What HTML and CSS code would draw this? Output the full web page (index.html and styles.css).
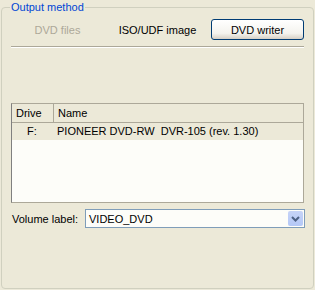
FILE: index.html
```html
<!DOCTYPE html>
<html lang="en">
<head>
    <meta charset="UTF-8">
    <title>Output method</title>
    <link rel="stylesheet" href="styles.css">
</head>
<body>
    <fieldset class="group">
        <legend>Output method</legend>

        <div class="methods">
            <button class="method" disabled>DVD files</button>
            <button class="method flat">ISO/UDF image</button>
            <button class="method active">DVD writer</button>
        </div>
        <div class="separator"></div>

        <div class="drives">
            <div class="drive-head">
                <div class="col-drive">Drive</div>
                <div class="col-name">Name</div>
            </div>
            <div class="drive-row">
                <div class="col-drive">F:</div>
                <div class="col-name">PIONEER DVD-RW&nbsp; DVR-105 (rev. 1.30)</div>
            </div>
        </div>

        <div class="volume">
            <label for="volume">Volume label:</label>
            <div class="combo">
                <span id="volume">VIDEO_DVD</span>
                <span class="combo-btn">
                    <svg width="9" height="6" viewBox="0 0 9 6"><path d="M1 1 L4.5 4.5 L8 1" fill="none" stroke="#4d6185" stroke-width="2"/></svg>
                </span>
            </div>
        </div>
    </fieldset>
</body>
</html>
```

FILE: styles.css
```css
body {
    margin: 0;
    padding: 0;
    width: 315px;
    height: 290px;
    background-color: #ece9d8;
    font-family: "Liberation Sans", Arial, sans-serif;
    font-size: 11px;
    color: #000;
}

.group {
    box-sizing: border-box;
    margin: 1px 1px 0 1px;
    padding: 0 9px 0 9px;
    height: 288px;
    border: 1px solid #d0d0bf;
    border-radius: 4px;
}

.group legend {
    margin-left: -1px;
    padding: 0 1px;
    color: #0046d5;
    font-size: 11px;
}

.methods {
    display: grid;
    grid-template-columns: repeat(3, 1fr);
    gap: 7px;
    margin-top: 6px;
}

.method {
    height: 21px;
    padding: 0;
    border: 1px solid transparent;
    background: none;
    font-family: inherit;
    font-size: 11px;
    color: #000;
}

.method:disabled {
    color: #aca899;
}

.method.active {
    border-color: #003c74;
    border-radius: 3px;
    background: linear-gradient(#ffffff, #f4f3ee 70%, #d6d0c5);
}

.separator {
    height: 0;
    margin-top: 6px;
    border-top: 1px solid #aca899;
    border-bottom: 1px solid #fff;
}

.drives {
    margin-top: 55px;
    height: 98px;
    border: 1px solid #aca899;
    border-left-color: #808080;
    background-color: #fdfdf9;
}

.drive-head, .drive-row {
    display: flex;
}

.drive-head {
    height: 18px;
    line-height: 18px;
    background-color: #ece9d8;
    border-bottom: 1px solid #aca899;
}

.drive-head .col-drive {
    border-right: 1px solid #aca899;
}

.drive-row {
    height: 17px;
    line-height: 17px;
    background-color: #ece9d8;
}

.col-drive {
    width: 37px;
    padding-left: 4px;
}

.drive-row .col-drive {
    padding-left: 15px;
    width: 26px;
}

.col-name {
    padding-left: 4px;
}

.volume {
    display: flex;
    align-items: center;
    margin-top: 6px;
}

.volume label {
    width: 73px;
    padding-left: 1px;
}

.combo {
    flex: 1;
    display: flex;
    align-items: center;
    justify-content: space-between;
    height: 17px;
    margin-right: -1px;
    border: 1px solid #7f9db9;
    background-color: #fdfdf9;
    padding-left: 3px;
}

.combo-btn {
    display: flex;
    align-items: center;
    justify-content: center;
    width: 15px;
    height: 15px;
    margin-right: 1px;
    border-radius: 2px;
    background: linear-gradient(#c6d3f7, #b4c8f7);
}
```
